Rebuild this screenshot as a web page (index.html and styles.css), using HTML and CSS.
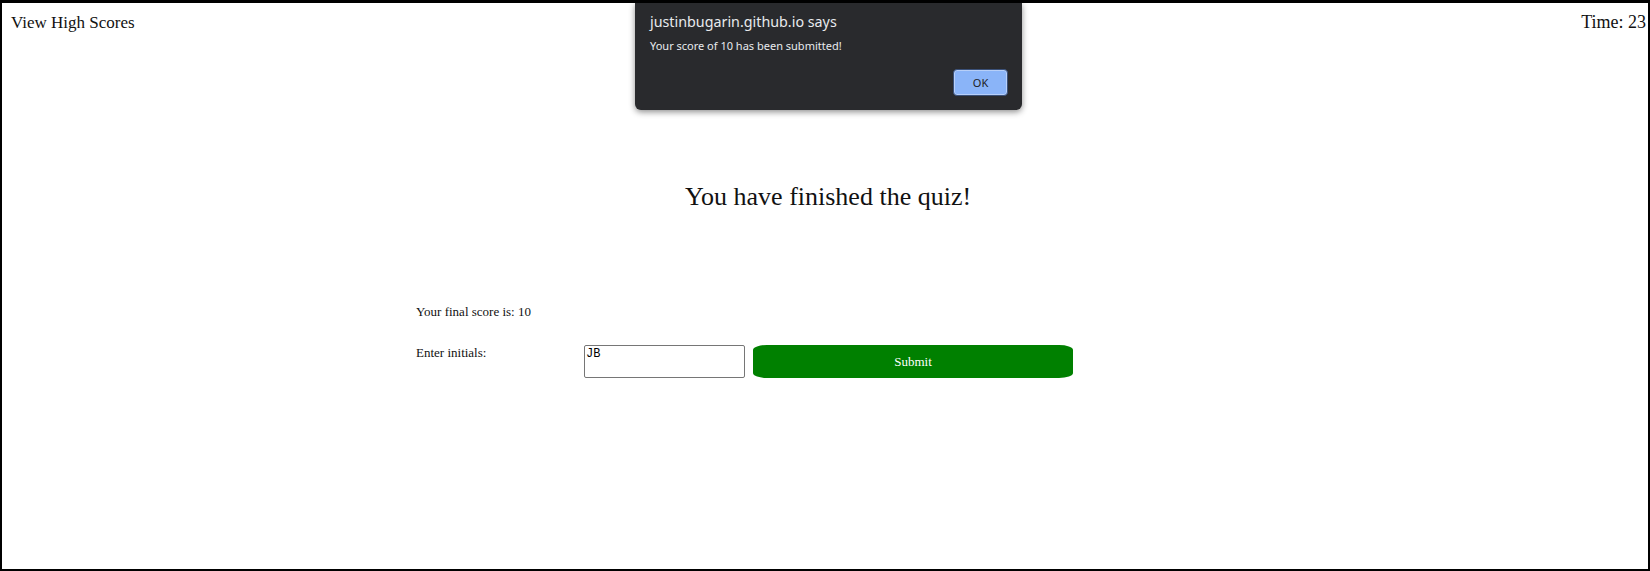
FILE: index.html
```html
<!DOCTYPE html>
<html lang="en">
<head>
<meta charset="utf-8">
<title>Quiz Finished</title>
<link rel="stylesheet" href="styles.css">
</head>
<body>
<div class="frame">
  <header class="topbar">
    <a class="link">View High Scores</a>
    <span class="timer">Time: 23</span>
  </header>
  <main class="content">
    <h1 class="title">You have finished the quiz!</h1>
    <section class="result">
      <p class="score">Your final score is: 10</p>
      <div class="entry">
        <label class="entry-label" for="initials">Enter initials:</label>
        <textarea class="initials" id="initials">JB</textarea>
        <button class="submit">Submit</button>
      </div>
    </section>
  </main>
  <div class="dialog">
    <div class="dialog-title">justinbugarin.github.io says</div>
    <div class="dialog-msg">Your score of 10 has been submitted!</div>
    <div class="dialog-actions">
      <button class="ok">OK</button>
    </div>
  </div>
</div>
</body>
</html>
```
FILE: styles.css
```css
html, body {
  margin: 0;
  padding: 0;
}
body {
  font-family: "Liberation Serif", "Times New Roman", serif;
  color: #111;
  background: #fff;
}
.frame {
  position: relative;
  box-sizing: border-box;
  height: 571px;
  border-style: solid;
  border-color: #000;
  border-width: 3px 2px 2px 2px;
  overflow: hidden;
}
.topbar {
  display: flex;
  justify-content: space-between;
  align-items: baseline;
  padding: 9px 2px 0 9px;
}
.link {
  font-size: 17px;
  color: #111;
}
.timer {
  font-size: 18px;
}
.title {
  margin: 149px 0 0;
  padding-left: 6px;
  font-size: 26px;
  font-weight: normal;
  text-align: center;
}
.result {
  width: 818px;
  margin: 92px auto 0;
  font-size: 13px;
}
.score {
  margin: 0;
  line-height: 15px;
}
.entry {
  display: grid;
  grid-template-columns: 168px 169px 320px;
  align-items: start;
  margin-top: 26px;
}
.entry-label {
  line-height: 15px;
}
.initials {
  box-sizing: border-box;
  width: 161px;
  height: 33px;
  margin: 0;
  padding: 1px 1px;
  border: 1px solid #767676;
  border-radius: 2px;
  font-family: "Liberation Mono", "Courier New", monospace;
  font-size: 12px;
  color: #000;
  resize: none;
}
.submit {
  width: 320px;
  height: 33px;
  margin: 0;
  border: none;
  border-radius: 14px / 5px;
  background: #008000;
  color: #fff;
  font-family: "Liberation Serif", "Times New Roman", serif;
  font-size: 13px;
}
.dialog {
  position: absolute;
  left: 633px;
  top: 0;
  width: 387px;
  height: 107px;
  box-sizing: border-box;
  display: flex;
  flex-direction: column;
  padding: 10px 14px 14px 15px;
  background: #292a2d;
  border-radius: 0 0 6px 6px;
  box-shadow: 0 2px 6px rgba(0, 0, 0, 0.45);
  font-family: "Noto Sans", "Open Sans", sans-serif;
  color: #e8eaed;
}
.dialog-title {
  font-size: 14.3px;
  line-height: 18px;
}
.dialog-msg {
  margin-top: 7px;
  font-size: 11px;
  line-height: 15px;
}
.dialog-actions {
  margin-top: auto;
  display: flex;
  justify-content: flex-end;
}
.ok {
  width: 55px;
  height: 27px;
  margin: 0;
  border: 1px solid #3a5078;
  border-radius: 4px;
  box-shadow: inset 0 0 0 1px #b7cff8;
  background: #8ab4f8;
  color: #202124;
  font-family: "Noto Sans", "Open Sans", sans-serif;
  font-size: 11px;
}
```
